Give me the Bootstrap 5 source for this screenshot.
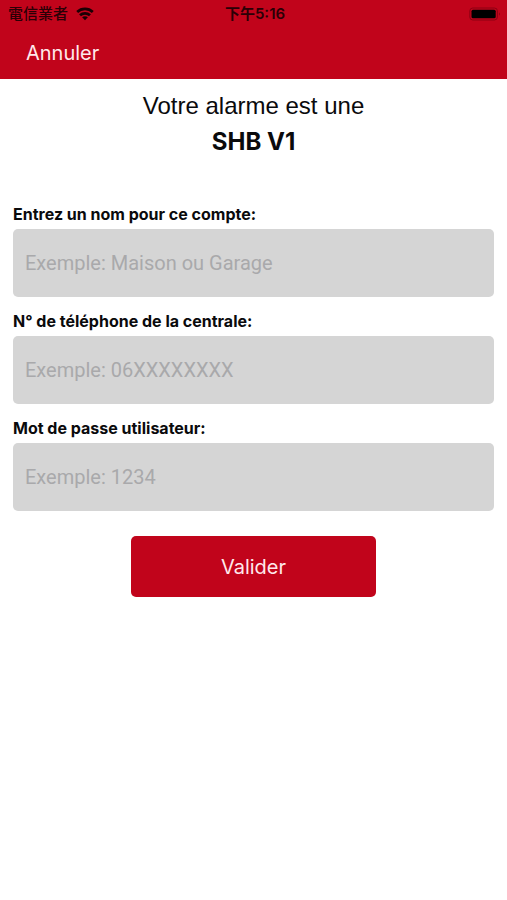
<!DOCTYPE html>
<html lang="fr">
<head>
<meta charset="utf-8">
<meta name="viewport" content="width=device-width, initial-scale=1">
<title>SHB V1</title>
<link href="https://cdn.jsdelivr.net/npm/bootstrap@5.3.0/dist/css/bootstrap.min.css" rel="stylesheet">
<style>
body { font-family: Inter, "Noto Sans CJK TC", sans-serif; color: #0a0a0c; background: #fff; }
.app-header { background: #c1041b; }
.status-bar { height: 27px; padding: 0 5px 0 8px; font-size: 15px; line-height: 27px; color: #2a0006; }
.status-cjk { font-weight: 500; }
.status-time { font-weight: 600; }
.nav-row { height: 52px; padding: 0 26px; }
.btn-cancel { font-size: 20px; line-height: 24px; color: #ffe9ec; }
.btn-cancel:hover { color: #fff; }
.intro { font-family: "Liberation Sans", Arial, sans-serif; font-size: 24px; line-height: 36px; padding-top: 9px; margin-bottom: 44px; }
.model { font-family: Inter, sans-serif; font-weight: 700; }
.account-form { padding: 0 13px; }
.field { margin-bottom: 14px; }
.field-label { font-size: 16px; line-height: 20px; font-weight: 700; margin-bottom: 5px; }
.field-input, .field-input:focus { height: 68px; padding: 0 12px; font-family: Roboto, sans-serif; font-size: 20px; background: #d5d5d5; border: 0; border-radius: 5px; }
.field-input::placeholder { color: #a9a9ab; opacity: 1; }
.btn-submit, .btn-submit:hover { width: 245px; height: 61px; margin-top: 11px; font-size: 20px; color: #ffe9ec; background: #c1041b; border: 0; border-radius: 5px; }
</style>
<script src="https://cdn.jsdelivr.net/npm/bootstrap@5.3.0/dist/js/bootstrap.bundle.min.js"></script>
</head>
<body>
<header class="app-header">
  <div class="status-bar row g-0 align-items-center">
    <div class="col d-flex align-items-center gap-2">
      <span class="status-cjk">電信業者</span>
      <svg width="18" height="14" viewBox="0 0 18 14" fill="none" stroke="#1a0004" stroke-width="2.7" aria-hidden="true">
        <path d="M1.2 4.9C5.6.8 12.4.8 16.8 4.9"/>
        <path d="M4 8.3c2.8-2.7 7.2-2.7 10 0"/>
        <path d="M9 13.2 6.1 10.3c1.6-1.5 4.2-1.5 5.8 0z" fill="#1a0004" stroke="none"/>
      </svg>
    </div>
    <div class="col-auto status-time">下午5:16</div>
    <div class="col d-flex justify-content-end">
      <svg width="33" height="14" viewBox="0 0 33 14" aria-hidden="true">
        <rect x=".8" y="1" width="27.6" height="12" rx="3" fill="none" stroke="#8c0012" stroke-width="1"/>
        <rect x="2.5" y="2.7" width="24.2" height="8.6" rx="1.5" fill="#000"/>
        <path d="M30 5.2q1.8 1.8 0 3.6z" fill="#7c0010"/>
      </svg>
    </div>
  </div>
  <nav class="nav-row d-flex align-items-center">
    <button type="button" class="btn btn-cancel border-0 p-0">Annuler</button>
  </nav>
</header>
<main>
  <h1 class="intro fw-normal text-center">Votre alarme est une<br><span class="model">SHB V1</span></h1>
  <form class="account-form">
    <div class="field">
      <label class="field-label d-block" for="account">Entrez un nom pour ce compte:</label>
      <input class="form-control field-input" id="account" type="text" placeholder="Exemple: Maison ou Garage">
    </div>
    <div class="field">
      <label class="field-label d-block" for="phone">N° de téléphone de la centrale:</label>
      <input class="form-control field-input" id="phone" type="tel" placeholder="Exemple: 06XXXXXXXX">
    </div>
    <div class="field">
      <label class="field-label d-block" for="code">Mot de passe utilisateur:</label>
      <input class="form-control field-input" id="code" type="text" placeholder="Exemple: 1234">
    </div>
    <div class="text-center">
      <button type="submit" class="btn btn-submit">Valider</button>
    </div>
  </form>
</main>
</body>
</html>
